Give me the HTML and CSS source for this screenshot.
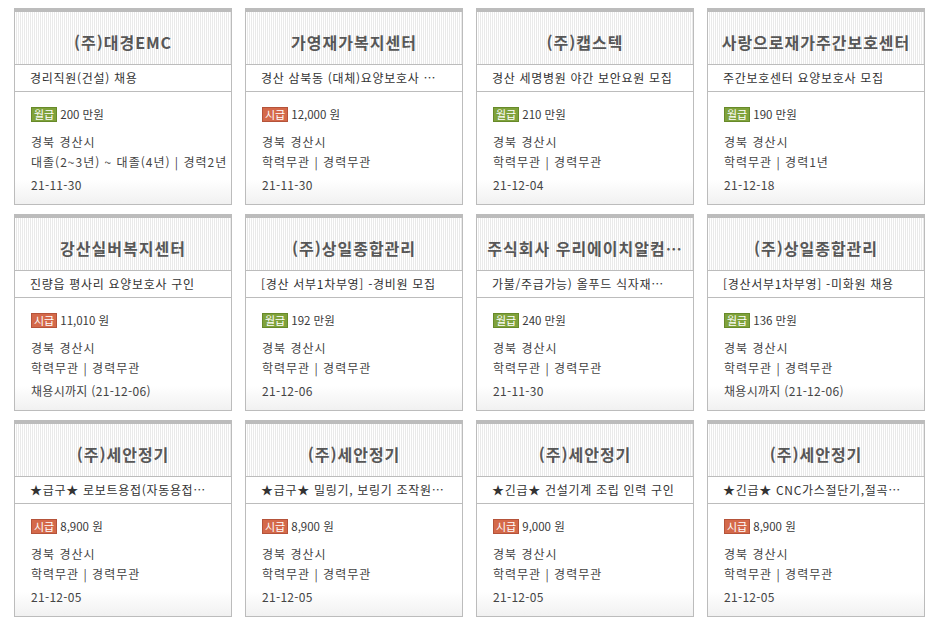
FILE: index.html
```html
<!DOCTYPE html>
<html lang="ko">
<head>
<meta charset="utf-8">
<title>채용정보</title>
<link rel="stylesheet" href="styles.css">
</head>
<body>
<div class="grid">
  <div class="card">
    <div class="head"><span class="title">(주)대경EMC</span></div>
    <div class="sub">경리직원(건설) 채용</div>
    <div class="body">
      <div class="pay"><span class="badge month">월급</span> 200 만원</div>
      <div class="line">경북 경산시</div>
      <div class="line">대졸(2~3년) ~ 대졸(4년) | 경력2년</div>
      <div class="date">21-11-30</div>
    </div>
  </div>
  <div class="card">
    <div class="head"><span class="title">가영재가복지센터</span></div>
    <div class="sub">경산 삼북동 (대체)요양보호사 …</div>
    <div class="body">
      <div class="pay"><span class="badge hour">시급</span> 12,000 원</div>
      <div class="line">경북 경산시</div>
      <div class="line">학력무관 | 경력무관</div>
      <div class="date">21-11-30</div>
    </div>
  </div>
  <div class="card">
    <div class="head"><span class="title">(주)캡스텍</span></div>
    <div class="sub">경산 세명병원 야간 보안요원 모집</div>
    <div class="body">
      <div class="pay"><span class="badge month">월급</span> 210 만원</div>
      <div class="line">경북 경산시</div>
      <div class="line">학력무관 | 경력무관</div>
      <div class="date">21-12-04</div>
    </div>
  </div>
  <div class="card">
    <div class="head"><span class="title">사랑으로재가주간보호센터</span></div>
    <div class="sub">주간보호센터 요양보호사 모집</div>
    <div class="body">
      <div class="pay"><span class="badge month">월급</span> 190 만원</div>
      <div class="line">경북 경산시</div>
      <div class="line">학력무관 | 경력1년</div>
      <div class="date">21-12-18</div>
    </div>
  </div>

  <div class="card">
    <div class="head"><span class="title">강산실버복지센터</span></div>
    <div class="sub">진량읍 평사리 요양보호사 구인</div>
    <div class="body">
      <div class="pay"><span class="badge hour">시급</span> 11,010 원</div>
      <div class="line">경북 경산시</div>
      <div class="line">학력무관 | 경력무관</div>
      <div class="date">채용시까지 (21-12-06)</div>
    </div>
  </div>
  <div class="card">
    <div class="head"><span class="title">(주)상일종합관리</span></div>
    <div class="sub">[경산 서부1차부영] -경비원 모집</div>
    <div class="body">
      <div class="pay"><span class="badge month">월급</span> 192 만원</div>
      <div class="line">경북 경산시</div>
      <div class="line">학력무관 | 경력무관</div>
      <div class="date">21-12-06</div>
    </div>
  </div>
  <div class="card">
    <div class="head"><span class="title">주식회사 우리에이치알컴…</span></div>
    <div class="sub">가불/주급가능) 올푸드 식자재…</div>
    <div class="body">
      <div class="pay"><span class="badge month">월급</span> 240 만원</div>
      <div class="line">경북 경산시</div>
      <div class="line">학력무관 | 경력무관</div>
      <div class="date">21-11-30</div>
    </div>
  </div>
  <div class="card">
    <div class="head"><span class="title">(주)상일종합관리</span></div>
    <div class="sub">[경산서부1차부영] -미화원 채용</div>
    <div class="body">
      <div class="pay"><span class="badge month">월급</span> 136 만원</div>
      <div class="line">경북 경산시</div>
      <div class="line">학력무관 | 경력무관</div>
      <div class="date">채용시까지 (21-12-06)</div>
    </div>
  </div>

  <div class="card">
    <div class="head"><span class="title">(주)세안정기</span></div>
    <div class="sub">★급구★ 로보트용접(자동용접…</div>
    <div class="body">
      <div class="pay"><span class="badge hour">시급</span> 8,900 원</div>
      <div class="line">경북 경산시</div>
      <div class="line">학력무관 | 경력무관</div>
      <div class="date">21-12-05</div>
    </div>
  </div>
  <div class="card">
    <div class="head"><span class="title">(주)세안정기</span></div>
    <div class="sub">★급구★ 밀링기, 보링기 조작원…</div>
    <div class="body">
      <div class="pay"><span class="badge hour">시급</span> 8,900 원</div>
      <div class="line">경북 경산시</div>
      <div class="line">학력무관 | 경력무관</div>
      <div class="date">21-12-05</div>
    </div>
  </div>
  <div class="card">
    <div class="head"><span class="title">(주)세안정기</span></div>
    <div class="sub">★긴급★ 건설기계 조립 인력 구인</div>
    <div class="body">
      <div class="pay"><span class="badge hour">시급</span> 9,000 원</div>
      <div class="line">경북 경산시</div>
      <div class="line">학력무관 | 경력무관</div>
      <div class="date">21-12-05</div>
    </div>
  </div>
  <div class="card">
    <div class="head"><span class="title">(주)세안정기</span></div>
    <div class="sub">★긴급★ CNC가스절단기,절곡…</div>
    <div class="body">
      <div class="pay"><span class="badge hour">시급</span> 8,900 원</div>
      <div class="line">경북 경산시</div>
      <div class="line">학력무관 | 경력무관</div>
      <div class="date">21-12-05</div>
    </div>
  </div>
</div>
</body>
</html>
```
FILE: styles.css
```css
html, body {
  margin: 0;
  padding: 0;
  background: #fff;
}
body {
  font-family: "Noto Sans CJK KR", "Noto Sans", sans-serif;
  color: #444;
}
.grid {
  display: grid;
  grid-template-columns: repeat(4, 218px);
  column-gap: 13px;
  row-gap: 9px;
  padding: 8px 0 0 14px;
}
.card {
  box-sizing: border-box;
  height: 197px;
  border: 1px solid #bcbcbc;
  border-top: 4px solid #bcbcbc;
  display: flex;
  flex-direction: column;
}
.head {
  height: 53px;
  box-sizing: border-box;
  padding: 18px 4px 0;
  text-align: center;
  background: repeating-linear-gradient(90deg, #ffffff 0, #ffffff 1px, #eaeaea 1px, #eaeaea 2px);
  border-bottom: 1px solid #bcbcbc;
  white-space: nowrap;
  overflow: hidden;
}
.title {
  font-size: 16px;
  line-height: 22px;
  font-weight: 600;
  color: #575757;
  letter-spacing: 1px;
}
.sub {
  height: 27px;
  box-sizing: border-box;
  padding: 0 4px 0 15px;
  font-size: 12px;
  line-height: 26px;
  color: #333;
  letter-spacing: 0.7px;
  border-bottom: 1px solid #bcbcbc;
  white-space: nowrap;
  overflow: hidden;
}
.body {
  flex: 1;
  padding: 12px 6px 0 16px;
  background: linear-gradient(180deg, #ffffff 0%, #ffffff 78%, #f1f1f1 100%);
  font-size: 12px;
  color: #444;
}
.pay {
  display: flex;
  align-items: center;
  gap: 3px;
  height: 20px;
  font-size: 11.5px;
  color: #3a3a3a;
  margin-bottom: 8px;
}
.badge {
  display: inline-block;
  box-sizing: border-box;
  height: 15px;
  padding: 0 2px;
  font-size: 11px;
  line-height: 13px;
  color: #fff;
  border: 1px solid;
}
.month {
  background: #7fa23b;
  border-color: #678a29;
}
.hour {
  background: #d4694a;
  border-color: #b5533a;
}
.line {
  line-height: 20px;
  letter-spacing: 1px;
  white-space: nowrap;
}
.date {
  line-height: 20px;
  margin-top: 3px;
  letter-spacing: 0.3px;
  white-space: nowrap;
}
```
